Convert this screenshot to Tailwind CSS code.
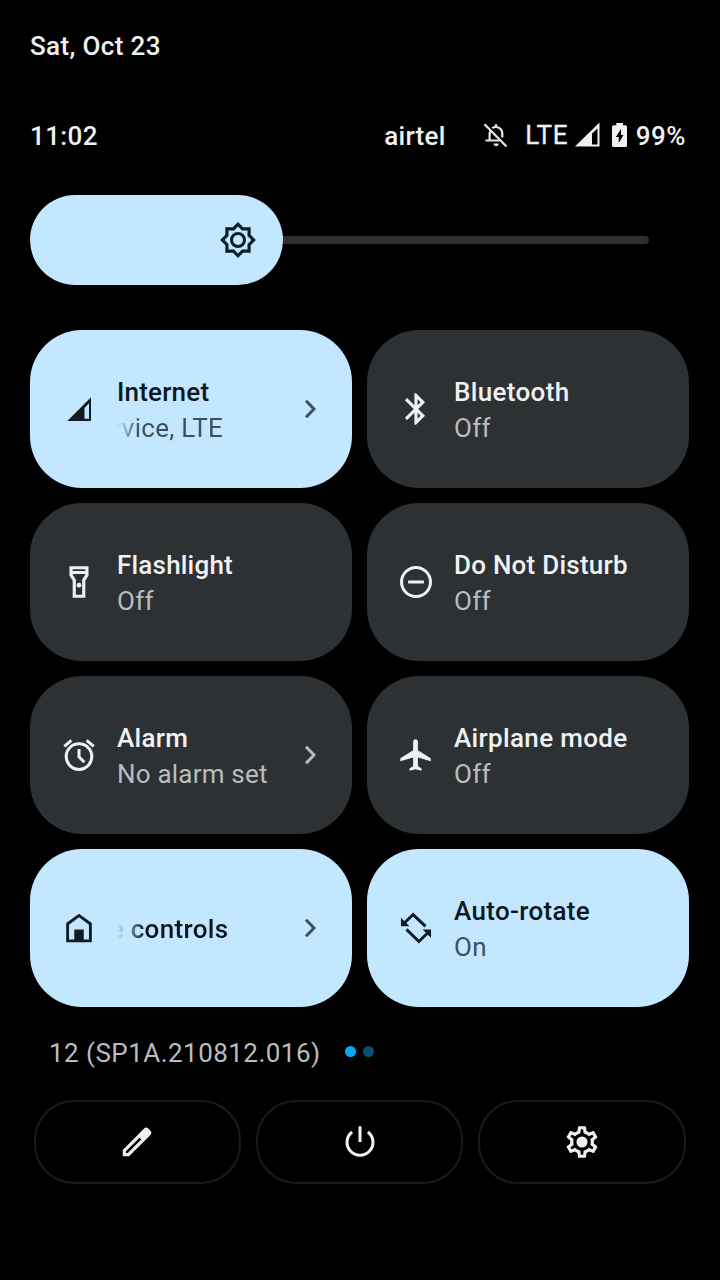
<!DOCTYPE html>
<html lang="en">
<head>
<meta charset="utf-8">
<title>Quick settings</title>
<script src="https://cdn.jsdelivr.net/npm/@tailwindcss/browser@4"></script>
</head>
<body class="bg-black">
<main class="flex h-[1280px] w-[720px] flex-col overflow-hidden bg-black font-['Roboto',sans-serif] text-[26px] leading-9 tracking-[0.28px] text-[#f0f1f2]">

  <header class="flex flex-col pt-7 pl-[30px] pr-[34px] font-medium">
    <div class="h-9 whitespace-nowrap tracking-[0.36px]">Sat, Oct 23</div>
    <div class="mt-[54px] flex h-9 items-center">
      <span class="flex-1 tracking-[0.400px]">11:02</span>
      <span class="w-[99px]">airtel</span>
      <svg class="mr-4 size-[26px]" viewBox="0 0 26 26" fill="none" stroke="#e8e8e8" stroke-width="2.200">
        <path d="M1.500 1.300 23.500 23.500"/>
        <path d="M7.300 8C6.600 9.500 6.600 11 6.600 12.500V17.500M2.500 17.500H17.500M9.300 5.200C11 3.800 13 3.700 14.500 4.200C17.800 5 19.300 8 19.300 11V14.500"/>
        <path d="M13 1.200V4"/><path d="M10.500 20.500H15.700C15.500 24 10.700 24 10.500 20.500Z" fill="#e8e8e8" stroke="none"/>
      </svg>
      <span class="mb-[3px] w-[50px] font-normal tracking-[0.700px] [-webkit-text-stroke:0.300px_#f0f1f2]">LTE</span>
      <svg class="mr-3 mb-[3px] h-6 w-[25px]" viewBox="0 0 25 24" fill="#f0f1f2"><path fill-rule="evenodd" d="M0 23.500 24.500 -.5V23.500ZM17 10.500V21.500H22.500V5.500Z"/></svg>
      <svg class="mr-[8.500px] mb-[2px] h-6 w-[15px]" viewBox="0 0 15 24" fill="#f0f1f2"><path fill-rule="evenodd" d="M4.300 0H11V2.200H13.500Q15 2.200 15 3.700V22.500Q15 24 13.500 24H1.500Q0 24 0 22.500V3.700Q0 2.200 1.500 2.200H4.300ZM9 6 3.800 14H6.700V20L11.500 12H9Z"/></svg>
      <span class="tracking-[0.500px]">99%</span>
    </div>
  </header>

  <section class="mt-[41px] ml-[30px] flex h-[90px] w-[619px] items-center">
    <div class="z-10 flex h-full w-[253px] items-center justify-end rounded-full bg-[#c2e7ff] pr-[26px]">
      <svg class="size-[38px]" viewBox="0 0 24 24" fill="#0e1d28"><path fill-rule="evenodd" d="M20 8.690V4h-4.690L12 .69 8.690 4H4v4.690L.69 12 4 15.310V20h4.690L12 23.310 15.310 20H20v-4.690L23.310 12 20 8.690zm-2 5.790V18h-3.520L12 20.480 9.520 18H6v-3.520L3.520 12 6 9.520V6h3.520L12 3.520 14.480 6H18v3.520L20.480 12 18 14.480z"/><circle cx="12" cy="12" r="4.100" fill="none" stroke="#0e1d28" stroke-width="1.900"/></svg>
    </div>
    <div class="-ml-5 h-2 flex-1 rounded-full bg-[#2d3134]"></div>
  </section>

  <section class="mx-[30px] mt-[45px] grid grid-cols-[322px_322px] auto-rows-[158px] gap-[15px]">

    <div class="flex items-center rounded-[52px] bg-[#c2e7ff] px-[30px] text-[#0c181f]">
      <svg class="size-[38px]" viewBox="0 0 38 38" fill="#101c22"><path fill-rule="evenodd" d="M7.300 31 31 7.300V31ZM24.500 18V28.800H29V13.200Z"/></svg>
      <div class="ml-[19px] flex-1 pt-[2px]"><div class="font-medium tracking-[0.200px]">Internet</div>
        <div class="flex w-[106px] justify-end overflow-hidden whitespace-nowrap text-[#3f4f5b] [mask-image:linear-gradient(to_right,transparent,black_22px)]">rvice, LTE</div></div>
      <svg class="mr-[6px] h-5 w-3" viewBox="0 0 12 20" fill="none" stroke="#3f4f5b" stroke-width="3"><path d="M2 1.700 10 10 2 18.300"/></svg>
    </div>

    <div class="flex items-center rounded-[52px] bg-[#2d3134] px-[30px]">
      <svg class="size-[38px]" viewBox="0 0 24 24" fill="#f0f1f2"><path d="M17.710 7.710L12 2h-1v7.590L6.410 5 5 6.410 10.590 12 5 17.590 6.410 19 11 14.410V22h1l5.710-5.710-4.300-4.290 4.300-4.290zM13 5.830l1.880 1.880L13 9.590V5.830zm1.880 10.460L13 18.170v-3.760l1.880 1.880z"/></svg>
      <div class="ml-[19px] pt-[2px]"><div class="font-medium tracking-[0.340px]">Bluetooth</div><div class="text-[#b9bdc0]">Off</div></div>
    </div>

    <div class="flex items-center rounded-[52px] bg-[#2d3134] px-[30px]">
      <svg class="size-[38px]" viewBox="0 0 24 24" fill="#f0f1f2"><path fill-rule="evenodd" d="M6 2v6l2 3v11h8V11l2-3V2H6zm10 2v1H8V4h8zm-2 6.400V20h-4v-9.610l-2-3V7h8v.39l-2 3.010z"/><circle cx="12" cy="14" r="1.500"/></svg>
      <div class="ml-[19px] pt-[2px]"><div class="font-medium tracking-[0.200px]">Flashlight</div><div class="text-[#b9bdc0]">Off</div></div>
    </div>

    <div class="flex items-center rounded-[52px] bg-[#2d3134] px-[30px]">
      <svg class="size-[38px]" viewBox="0 0 24 24" fill="none" stroke="#f0f1f2" stroke-width="1.900"><circle cx="12" cy="12" r="9.150"/><path d="M7 12H17"/></svg>
      <div class="ml-[19px] pt-[2px]"><div class="font-medium tracking-[0.240px]">Do Not Disturb</div><div class="text-[#b9bdc0]">Off</div></div>
    </div>

    <div class="flex items-center rounded-[52px] bg-[#2d3134] px-[30px]">
      <svg class="size-[38px]" viewBox="0 0 24 24" fill="none" stroke="#f0f1f2" stroke-width="1.900"><circle cx="12" cy="13" r="8.100"/><path d="M12 8.200V13.200L15.400 16.600M2.700 6.500 7.200 2.700M21.300 6.500 16.800 2.700"/></svg>
      <div class="ml-[19px] flex-1 pt-[2px]"><div class="font-medium">Alarm</div><div class="text-[#b9bdc0] tracking-[0.200px]">No alarm set</div></div>
      <svg class="mr-[6px] h-5 w-3" viewBox="0 0 12 20" fill="none" stroke="#b9bdc0" stroke-width="3"><path d="M2 1.700 10 10 2 18.300"/></svg>
    </div>

    <div class="flex items-center rounded-[52px] bg-[#2d3134] px-[30px]">
      <svg class="size-[38px]" viewBox="0 0 24 24" fill="#f0f1f2"><path d="M21.300 16v-2l-8.100-5V3.500c0-.83-.67-1.500-1.500-1.500s-1.500.67-1.500 1.500V9L2.100 14v2l8.100-2.500V19L7.900 20.500V22l3.800-1 3.800 1v-1.500L13.200 19v-5.500L21.300 16z"/></svg>
      <div class="ml-[19px] pt-[2px]"><div class="font-medium tracking-[0.340px]">Airplane mode</div><div class="text-[#b9bdc0]">Off</div></div>
    </div>

    <div class="flex items-center rounded-[52px] bg-[#c2e7ff] px-[30px] text-[#0c181f]">
      <svg class="size-[38px]" viewBox="0 0 24 24" fill="#101c22"><path fill-rule="evenodd" d="M3.900 8.900 12 3l8.100 5.900V21H3.900ZM5.700 9.900V19.200H9V13H15V19.200H18.300V9.900L12 5.200Z"/></svg>
      <div class="ml-[19px] flex-1 pt-[2px]"><div class="flex w-[111.500px] justify-end overflow-hidden whitespace-nowrap font-medium tracking-[0.340px] [mask-image:linear-gradient(to_right,transparent,black_28px)]">e controls</div></div>
      <svg class="mr-[6px] h-5 w-3" viewBox="0 0 12 20" fill="none" stroke="#3f4f5b" stroke-width="3"><path d="M2 1.700 10 10 2 18.300"/></svg>
    </div>

    <div class="flex items-center rounded-[52px] bg-[#c2e7ff] px-[30px] text-[#0c181f]">
      <svg class="size-[38px]" viewBox="0 0 24 24" fill="none" stroke="#101c22" stroke-width="1.900"><path d="M4.500 9 10.200 3.500 18 11M6 12.900 13.800 20.500 19.500 15"/><path d="M2.500 5.500V10.900H7.900ZM21.500 18.300V13H16.200Z" fill="#101c22" stroke="none"/></svg>
      <div class="ml-[19px] pt-[2px]"><div class="font-medium tracking-[0.340px]">Auto-rotate</div><div class="text-[#3f4f5b]">On</div></div>
    </div>
  </section>

  <div class="mt-[28px] ml-[49px] flex h-9 items-center text-[#b9bdc0]">
    <span class="w-[296px] whitespace-nowrap tracking-[0.460px]">12 (SP1A.210812.016)</span>
    <span class="mb-[3px] size-[11px] rounded-full bg-[#03a9f4]"></span>
    <span class="mb-[3px] ml-[7px] size-[11px] rounded-full bg-[#075073]"></span>
  </div>

  <footer class="mx-[34px] mt-[29px] grid h-[84px] grid-cols-[207px_207px_208px] gap-[15px]">
    <div class="flex items-center justify-center rounded-[40px] border-2 border-[#1b1b1b] pr-px">
      <svg class="size-[38px]" viewBox="0 0 24 24" fill="#f0f1f2"><path fill-rule="evenodd" d="M3 17V21H7L20.500 7.500C21.300 6.500 21.300 5.700 20.500 4.900L19.100 3.500C18.300 2.700 17.400 2.700 16.500 3.500ZM5 17.900 13.600 9.300 14.700 10.400 6.100 19H5Z"/></svg>
    </div>
    <div class="flex items-center justify-center rounded-[40px] border-2 border-[#1b1b1b]">
      <svg class="size-[38px]" viewBox="0 0 24 24" fill="none" stroke="#f0f1f2" stroke-width="1.900"><path d="M12 2V12M7 5.700A8.200 8.200 0 1 0 17 5.700"/></svg>
    </div>
    <div class="flex items-center justify-center rounded-[40px] border-2 border-[#1b1b1b]">
      <svg class="size-[38px]" viewBox="0 0 24 24" fill="#f0f1f2"><path d="M19.430 12.980c.04-.32.07-.64.07-.98 0-.34-.03-.66-.07-.98l2.110-1.650c.19-.15.24-.42.12-.64l-2-3.460c-.09-.16-.26-.25-.44-.25-.06 0-.12.01-.17.03l-2.490 1c-.52-.4-1.080-.73-1.690-.98l-.38-2.650C14.460 2.180 14.250 2 14 2h-4c-.25 0-.46.18-.49.42l-.38 2.650c-.61.25-1.170.59-1.690.98l-2.490-1c-.06-.02-.12-.03-.18-.03-.17 0-.34.09-.43.25l-2 3.460c-.13.22-.07.49.12.64l2.110 1.650c-.04.32-.07.65-.07.98 0 .33.03.66.07.98l-2.110 1.650c-.19.15-.24.42-.12.64l2 3.460c.09.16.26.25.44.25.06 0 .12-.01.17-.03l2.490-1c.52.4 1.080.73 1.690.98l.38 2.650c.03.24.24.42.49.42h4c.25 0 .46-.18.49-.42l.38-2.650c.61-.25 1.170-.59 1.690-.98l2.490 1c.06.02.12.03.18.03.17 0 .34-.09.43-.25l2-3.460c.12-.22.07-.49-.12-.64l-2.110-1.650zm-1.980-1.710c.04.31.05.52.05.73 0 .21-.02.43-.05.73l-.14 1.130.89.7 1.080.84-.7 1.210-1.270-.51-1.040-.42-.9.68c-.43.32-.84.56-1.250.73l-1.060.43-.16 1.130-.2 1.350h-1.400l-.19-1.350-.16-1.130-1.060-.43c-.43-.18-.83-.41-1.230-.71l-.91-.7-1.060.43-1.270.51-.7-1.210 1.080-.84.89-.7-.14-1.130c-.03-.31-.05-.54-.05-.74s.02-.43.05-.73l.14-1.130-.89-.7-1.080-.84.7-1.210 1.270.51 1.040.42.9-.68c.43-.32.84-.56 1.250-.73l1.060-.43.16-1.130.2-1.350h1.390l.19 1.350.16 1.130 1.060.43c.43.18.83.41 1.230.71l.91.7 1.060-.43 1.270-.51.7 1.210-1.070.85-.89.7.14 1.130z"/><circle cx="12" cy="12" r="3.500"/></svg>
    </div>
  </footer>
</main>
</body>
</html>
